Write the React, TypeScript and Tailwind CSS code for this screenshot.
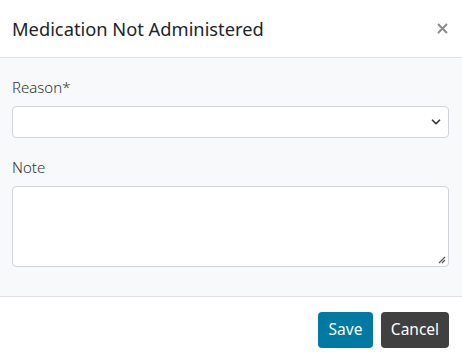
import { ChevronDown } from "lucide-react";

export default function App() {
	return (
		<div className="w-[462px] h-[362px] bg-white font-['Noto_Sans',sans-serif] text-[#212529]">
			<div className="flex h-[58px] items-center justify-between border-b border-[#dee2e6] pl-3 pr-[14px]">
				<h1 className="text-[18.3px] font-normal">Medication Not Administered</h1>
				<svg width="11" height="11" viewBox="0 0 11 11" className="text-[#8a8a8a]">
					<path d="M1 1L10 10M10 1L1 10" stroke="currentColor" strokeWidth="2" />
				</svg>
			</div>

			<div className="h-[239px] border-b border-[#dee2e6] bg-[#f8f9fa] px-3 pt-[17px]">
				<label className="block text-[15px] font-light leading-[24px] text-[#333]">Reason*</label>
				<div className="relative mt-[7px] h-[32px] w-[437px] rounded border border-[#ced4da] bg-white">
					<ChevronDown className="absolute right-[5px] top-[8px] h-[14px] w-[14px] text-[#343a40]" strokeWidth={3} />
				</div>

				<label className="mt-[17px] block text-[15px] font-light leading-[24px] text-[#333]">Note</label>
				<div className="relative mt-[7px] h-[81px] w-[437px] rounded border border-[#ced4da] bg-white">
					<svg width="8" height="8" viewBox="0 0 8 8" className="absolute bottom-[2px] right-[2px] text-[#555]">
						<path d="M1 7L7 1M4 7L7 4" stroke="currentColor" strokeWidth="1.2" />
					</svg>
				</div>
			</div>

			<div className="flex justify-end gap-2 pr-[13px] pt-[15px]">
				<button className="h-[36px] w-[55px] rounded bg-[#0079a3] text-[15.5px] text-white">Save</button>
				<button className="h-[36px] w-[68px] rounded bg-[#404040] text-[15.5px] text-white">Cancel</button>
			</div>
		</div>
	);
}
